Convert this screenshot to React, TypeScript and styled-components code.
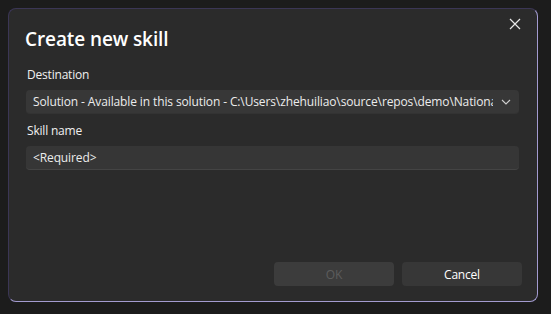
import styled, { createGlobalStyle } from 'styled-components'

const GlobalStyle = createGlobalStyle`
html, body {
    margin: 0;
    padding: 0;
    background: #1c1c1c;
}
body {
    font-family: "Open Sans", "Noto Sans", sans-serif;
    color: #ffffff;
}
`;

const Page = styled.div`
width: 551px;
height: 314px;
padding: 8px 13px 12px 8px;
box-sizing: border-box;
`;

const Dialog = styled.div`
position: relative;
height: 100%;
box-sizing: border-box;
background: #2b2b2b;
border: 1px solid #a39bd0;
border-top-color: #3b3655;
border-left-color: #3b3655;
border-radius: 8px;
padding: 15px 18px 15px 16px;
display: flex;
flex-direction: column;
`;

const CloseButton = styled.button`
position: absolute;
top: 5px;
right: 12px;
width: 20px;
height: 20px;
padding: 0;
border: none;
background: transparent;
display: flex;
align-items: center;
justify-content: center;
`;

const Title = styled.h1`
margin: 0 0 12px 0;
font-size: 19px;
font-weight: 600;
line-height: 30px;
letter-spacing: -0.1px;
`;

const Label = styled.div`
font-size: 12px;
letter-spacing: -0.2px;
line-height: 18px;
margin: 0 0 6px 2px;
color: #f0f0f0;
`;

const Field = styled.div<{ $select?: boolean }>`
height: 24px;
box-sizing: border-box;
background: ${props => props.$select ? '#373737' : '#363636'};
border-radius: 4px;
border-bottom: 1px solid ${props => props.$select ? '#333' : '#444'};
display: flex;
align-items: center;
padding: 0 8px 0 7px;
margin-left: 1px;
font-size: 12px;
letter-spacing: -0.12px;
color: #ececec;
margin-bottom: 8px;
gap: 8px;
`;

const FieldText = styled.span`
flex: 1;
white-space: nowrap;
overflow: hidden;
`;

const Footer = styled.div`
margin-top: auto;
display: flex;
justify-content: flex-end;
gap: 8px;
margin-right: -3px;
`;

const Button = styled.button<{ $disabled?: boolean }>`
width: 120px;
height: 24px;
border: none;
border-radius: 4px;
background: ${props => props.$disabled ? '#3c3c3c' : '#373737'};
color: ${props => props.$disabled ? '#5c5c5c' : '#ffffff'};
font-family: "Open Sans", "Noto Sans", sans-serif;
font-size: 12px;
letter-spacing: -0.2px;
padding: 0;
`;

const App = () => {
    return (
        <>
            <GlobalStyle />
            <Page>
                <Dialog>
                    <CloseButton aria-label="Close">
                        <svg width="12" height="12" viewBox="0 0 12 12">
                            <path d="M1 1 L11 11 M11 1 L1 11" stroke="#e8e8e8" strokeWidth="1.2" />
                        </svg>
                    </CloseButton>
                    <Title>Create new skill</Title>
                    <Label>Destination</Label>
                    <Field $select>
                        <FieldText>Solution - Available in this solution - C:\Users\zhehuiliao\source\repos\demo\NationalParks</FieldText>
                        <svg width="10" height="6" viewBox="0 0 10 6">
                            <path d="M1 1 L5 5 L9 1" stroke="#d0d0d0" strokeWidth="1.1" fill="none" />
                        </svg>
                    </Field>
                    <Label>Skill name</Label>
                    <Field>
                        <FieldText>&lt;Required&gt;</FieldText>
                    </Field>
                    <Footer>
                        <Button $disabled disabled>OK</Button>
                        <Button>Cancel</Button>
                    </Footer>
                </Dialog>
            </Page>
        </>
    )
}

export default App;
